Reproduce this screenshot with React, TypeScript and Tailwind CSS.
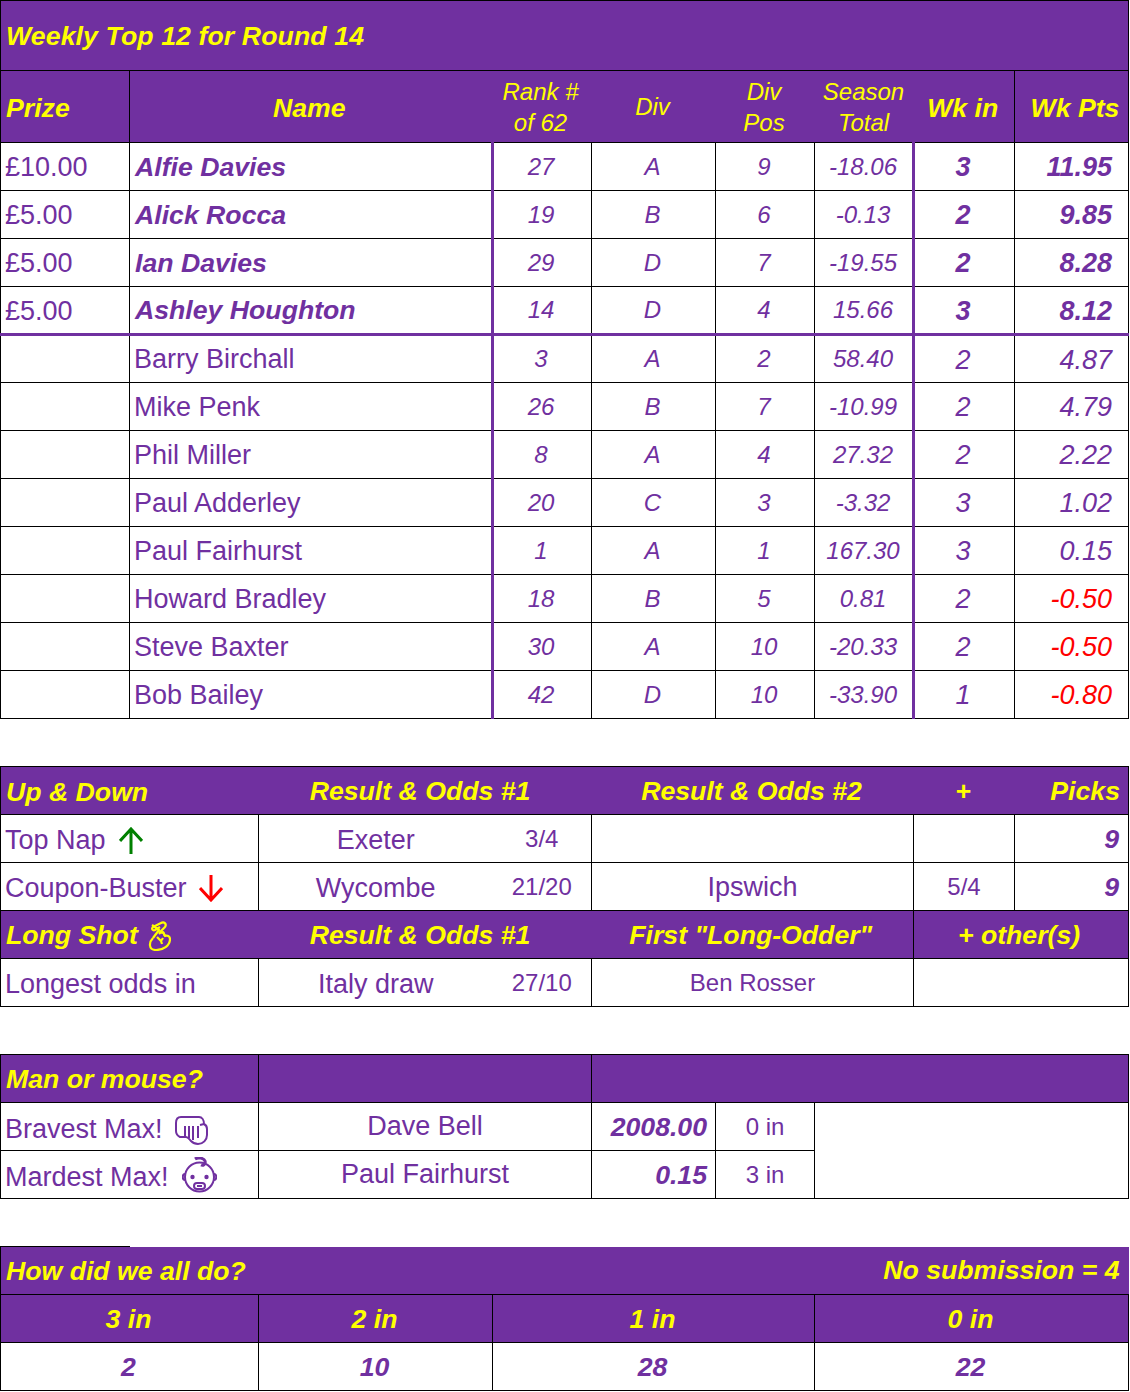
import { type FC, type ReactNode } from "react";

const FONT = "font-['Liberation_Sans',Arial,sans-serif]";

const Grid: FC<{ className?: string; children: ReactNode }> = ({ className = "", children }) => (
  <table className={`w-[1128px] table-fixed border-collapse text-[#7030a0] ${className}`}>
    <colgroup>
      <col className="w-[129px]" />
      <col className="w-[129px]" />
      <col className="w-[234px]" />
      <col className="w-[99px]" />
      <col className="w-[124px]" />
      <col className="w-[99px]" />
      <col className="w-[99px]" />
      <col className="w-[101px]" />
      <col className="w-[114px]" />
    </colgroup>
    <tbody>{children}</tbody>
  </table>
);

// header text
const bi = "bg-[#7030a0] text-[#ffff00] text-[26.67px] font-bold italic p-0";
const sub = "border-y border-black bg-[#7030a0] p-0 text-center text-[24px] italic leading-[31px] text-[#ffff00]";
const cell = "border border-black p-0 align-middle";
const boldCell = "border border-black p-0 align-middle text-[26.67px] font-bold italic";

const ArrowUp = () => (
  <svg width="24" height="27" viewBox="0 0 24 27" fill="none" stroke="#008000" strokeWidth="3">
    <path d="M12 27V2M1 14L12 2l11 12" />
  </svg>
);

const ArrowDown = () => (
  <svg width="24" height="27" viewBox="0 0 24 27" fill="none" stroke="#ff0000" strokeWidth="3">
    <path d="M12 0v25M1 13l11 12 11-12" />
  </svg>
);

const Fingers = () => (
  <svg width="23" height="30" viewBox="0 0 23 30" fill="none" stroke="#ffff00" strokeWidth="2.2" strokeLinejoin="round" className="mt-[2px]">
    <path d="M5 17C1 21 0 29 8 29c7 0 14-4 14-11 0-3-3-4-5-3l-2-4-3 1-1 1" />
    <path d="M11 12l6-6c2-3-1-6-4-4L5 6c-2 2 0 4 2 3l5-3" />
    <path d="M4 4l7 5-6 8M9 16l4 4 2-3M15 11l2 4M13 20l1 3" />
  </svg>
);

const Fist = () => (
  <svg width="33" height="30" viewBox="0 0 33 30" fill="none" stroke="#7030a0" strokeWidth="2" strokeLinejoin="round" className="mt-[1px]">
    <path d="M6 2h18c3 0 5 3 5 7 2 1 3 3 3 5v6c0 5-4 9-9 9-3 0-5-1-7-3-2-2-3-4-5-4H5c-2-1-4-3-4-6V8c0-4 2-6 5-6z" />
    <path d="M10 11v11M14 11v12M18 11v14M23 11v12M25 10l4-1" />
  </svg>
);

const Baby = () => (
  <svg width="35" height="37" viewBox="0 0 35 37" fill="none" stroke="#7030a0" strokeWidth="2">
    <circle cx="17.5" cy="20" r="14.5" />
    <path d="M13 2c3-2 9-1 10 2 1 3-2 5-4 4" strokeWidth="3" />
    <circle cx="10.5" cy="20" r="2.2" fill="#7030a0" stroke="none" />
    <circle cx="24.5" cy="20" r="2.2" fill="#7030a0" stroke="none" />
    <rect x="12" y="26" width="11" height="6" rx="3" />
    <path d="M15 29h5" />
    <path d="M3 17c-3 0-3 6 0 6M32 17c3 0 3 6 0 6" />
  </svg>
);

const players = [
  ["£10.00", "Alfie Davies", "27", "A", "9", "-18.06", "3", "11.95"],
  ["£5.00", "Alick Rocca", "19", "B", "6", "-0.13", "2", "9.85"],
  ["£5.00", "Ian Davies", "29", "D", "7", "-19.55", "2", "8.28"],
  ["£5.00", "Ashley Houghton", "14", "D", "4", "15.66", "3", "8.12"],
  ["", "Barry Birchall", "3", "A", "2", "58.40", "2", "4.87"],
  ["", "Mike Penk", "26", "B", "7", "-10.99", "2", "4.79"],
  ["", "Phil Miller", "8", "A", "4", "27.32", "2", "2.22"],
  ["", "Paul Adderley", "20", "C", "3", "-3.32", "3", "1.02"],
  ["", "Paul Fairhurst", "1", "A", "1", "167.30", "3", "0.15"],
  ["", "Howard Bradley", "18", "B", "5", "0.81", "2", "-0.50"],
  ["", "Steve Baxter", "30", "A", "10", "-20.33", "2", "-0.50"],
  ["", "Bob Bailey", "42", "D", "10", "-33.90", "1", "-0.80"],
];

const WeeklyTable = () => (
  <Grid>
    <tr className="h-[70px]">
      <td colSpan={9} className={`${bi} border border-black pl-[5px] pt-[1px] tracking-[0.1px]`}>Weekly Top 12 for Round 14</td>
    </tr>
    <tr className="h-[72px]">
      <td className={`${bi} border border-black pl-[5px] pt-[3px]`}>Prize</td>
      <td colSpan={2} className={`${bi} border-y border-l border-black pt-[2px] pr-[4px] text-center`}>Name</td>
      <td className={`${sub} pr-[3px]`}>Rank #<br />of 62</td>
      <td className={`${sub} pr-[2px]`}>Div</td>
      <td className={`${sub} pr-[2px]`}>Div<br />Pos</td>
      <td className={`${sub} pr-[1px]`}>Season<br />Total</td>
      <td className={`${bi} border-y border-black pt-[3px] pr-[2px] text-center`}>Wk in</td>
      <td className={`${bi} border border-black pt-[3px] pl-[7px] text-center`}>Wk Pts</td>
    </tr>
    {players.map((p, i) => {
      const top = i < 4;
      const negative = p[7].startsWith("-");
      const rule = i === 3 ? "border-b-[3px] border-b-[#7030a0]" : "";
      return (
        <tr key={p[1]} className="h-[48px]">
          <td className={`${cell} pl-[4px] pt-[2px] text-[27px] ${rule}`}>{p[0]}</td>
          <td
            colSpan={2}
            className={`${cell} border-r-[3px] border-r-[#7030a0] ${top ? "pl-[5px] text-[26.67px] font-bold italic" : "pl-[4px] text-[27px]"} ${i > 4 ? "pt-[2px]" : ""} ${rule}`}
          >
            {p[1]}
          </td>
          <td className={`${cell} pr-[3px] text-center text-[24px] italic ${rule}`}>{p[2]}</td>
          <td className={`${cell} pr-[2px] text-center text-[24px] italic ${rule}`}>{p[3]}</td>
          <td className={`${cell} pr-[2px] text-center text-[24px] italic ${rule}`}>{p[4]}</td>
          <td className={`${cell} border-r-[3px] border-r-[#7030a0] pr-[1px] text-center text-[24px] italic ${rule}`}>{p[5]}</td>
          <td className={`${cell} pr-[3px] pt-[2px] text-center text-[27px] italic ${top ? "font-bold" : ""} ${rule}`}>{p[6]}</td>
          <td className={`${cell} pr-[16px] pt-[2px] text-right text-[27px] italic ${top ? "font-bold" : ""} ${negative ? "text-[#ff0000]" : ""} ${rule}`}>{p[7]}</td>
        </tr>
      );
    })}
  </Grid>
);

const UpDownTable = () => (
  <Grid className="mt-[47px]">
    <tr className="h-[48px]">
      <td colSpan={2} className={`${bi} border-y border-l border-black pl-[5px] pt-[2px]`}>Up &amp; Down</td>
      <td colSpan={2} className={`${bi} border-y border-black pr-[10px] text-center`}>Result &amp; Odds #1</td>
      <td colSpan={3} className={`${bi} border-y border-black pr-[2px] text-center`}>Result &amp; Odds #2</td>
      <td className={`${bi} border-y border-black pr-[2px] text-center`}>+</td>
      <td className={`${bi} border-y border-r border-black pr-[8px] text-right`}>Picks</td>
    </tr>
    <tr className="h-[48px]">
      <td colSpan={2} className={`${cell} pl-[4px] text-[27px]`}>
        <span className="inline-flex items-center gap-[13px] pt-[3px]">Top Nap <ArrowUp /></span>
      </td>
      <td className="border-y border-l border-black pt-[3px] text-center text-[27px]">Exeter</td>
      <td className="border-y border-r border-black text-center text-[24px]">3/4</td>
      <td colSpan={3} className={cell}></td>
      <td className={cell}></td>
      <td className={`${boldCell} pr-[9px] text-right`}>9</td>
    </tr>
    <tr className="h-[48px]">
      <td colSpan={2} className={`${cell} pl-[4px] text-[27px]`}>
        <span className="inline-flex items-center gap-[12px] pt-[3px]">Coupon-Buster <ArrowDown /></span>
      </td>
      <td className="border-y border-l border-black pt-[3px] text-center text-[27px]">Wycombe</td>
      <td className="border-y border-r border-black text-center text-[24px]">21/20</td>
      <td colSpan={3} className={`${cell} pt-[2px] text-center text-[27px]`}>Ipswich</td>
      <td className={`${cell} text-center text-[24px]`}>5/4</td>
      <td className={`${boldCell} pr-[9px] text-right`}>9</td>
    </tr>
    <tr className="h-[48px]">
      <td colSpan={2} className={`${bi} border-y border-l border-black pl-[5px]`}>
        <span className="inline-flex items-center gap-[10px]">Long Shot <Fingers /></span>
      </td>
      <td colSpan={2} className={`${bi} border-y border-black pr-[10px] text-center`}>Result &amp; Odds #1</td>
      <td colSpan={3} className={`${bi} border-y border-r border-black pr-[3px] text-center`}>First "Long-Odder"</td>
      <td colSpan={2} className={`${bi} border border-black pr-[4px] text-center`}>+ other(s)</td>
    </tr>
    <tr className="h-[48px]">
      <td colSpan={2} className={`${cell} pl-[4px] pt-[3px] text-[27px]`}>Longest odds in</td>
      <td className="border-y border-l border-black pt-[3px] text-center text-[27px]">Italy draw</td>
      <td className="border-y border-r border-black text-center text-[24px]">27/10</td>
      <td colSpan={3} className={`${cell} text-center text-[24px]`}>Ben Rosser</td>
      <td colSpan={2} className={cell}></td>
    </tr>
  </Grid>
);

const ManOrMouseTable = () => (
  <Grid className="mt-[47px]">
    <tr className="h-[48px]">
      <td colSpan={2} className={`${bi} border border-black pl-[5px]`}>Man or mouse?</td>
      <td colSpan={2} className={`${bi} border border-black`}></td>
      <td colSpan={5} className={`${bi} border border-black`}></td>
    </tr>
    <tr className="h-[48px]">
      <td colSpan={2} className={`${cell} pl-[4px] text-[27px]`}>
        <span className="inline-flex items-center gap-[12px] pt-[6px]">Bravest Max! <Fist /></span>
      </td>
      <td colSpan={2} className={`${cell} text-center text-[27px]`}>Dave Bell</td>
      <td className={`${boldCell} pr-[8px] text-right`}>2008.00</td>
      <td className={`${cell} text-center text-[24px]`}>0 in</td>
      <td colSpan={3} rowSpan={2} className="border border-black"></td>
    </tr>
    <tr className="h-[48px]">
      <td colSpan={2} className={`${cell} pl-[4px] text-[27px]`}>
        <span className="inline-flex items-center gap-[13px] pt-[2px]"><span className="pt-[4px]">Mardest Max!</span> <Baby /></span>
      </td>
      <td colSpan={2} className={`${cell} text-center text-[27px]`}>Paul Fairhurst</td>
      <td className={`${boldCell} pr-[8px] text-right`}>0.15</td>
      <td className={`${cell} text-center text-[24px]`}>3 in</td>
    </tr>
  </Grid>
);

const HowDidTable = () => (
  <Grid className="mt-[47px]">
    <tr className="h-[48px]">
      <td className={`${bi} whitespace-nowrap border-t border-l border-t-black border-l-black pl-[5px]`}>How did we all do?</td>
      <td colSpan={8} className={`${bi} pr-[9px] text-right`}>No submission = 4</td>
    </tr>
    <tr className="h-[48px]">
      <td colSpan={2} className={`${bi} border border-black pr-[2px] text-center`}>3 in</td>
      <td className={`${bi} border border-black pr-[2px] text-center`}>2 in</td>
      <td colSpan={3} className={`${bi} border border-black pr-[2px] text-center`}>1 in</td>
      <td colSpan={3} className={`${bi} border border-black pr-[2px] text-center`}>0 in</td>
    </tr>
    <tr className="h-[48px]">
      <td colSpan={2} className={`${boldCell} pr-[2px] text-center`}>2</td>
      <td className={`${boldCell} pr-[2px] text-center`}>10</td>
      <td colSpan={3} className={`${boldCell} pr-[2px] text-center`}>28</td>
      <td colSpan={3} className={`${boldCell} pr-[2px] text-center`}>22</td>
    </tr>
  </Grid>
);

export default function App() {
  return (
    <div className={`min-h-[1392px] w-[1130px] bg-white ${FONT}`}>
      <WeeklyTable />
      <UpDownTable />
      <ManOrMouseTable />
      <HowDidTable />
    </div>
  );
}
